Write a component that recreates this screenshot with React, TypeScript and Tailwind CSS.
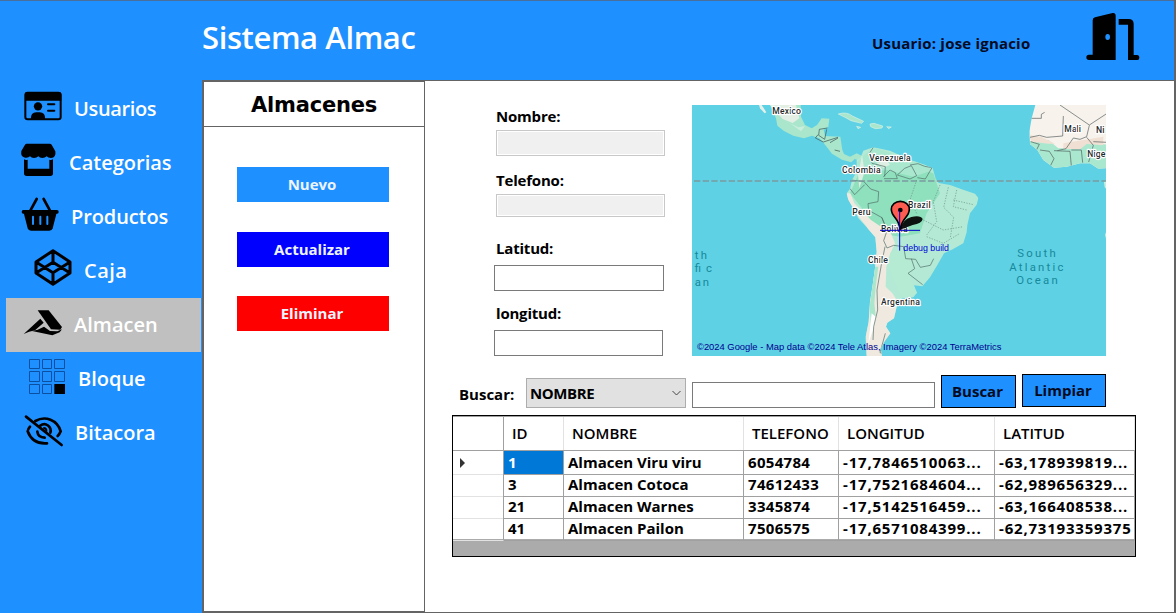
import type { ReactNode } from "react";

type NavItem = {
  label: string;
  iconWidth: string;
  viewBox: string;
  tracking: string;
  active?: boolean;
  icon: ReactNode;
};

const navItems: NavItem[] = [
  {
    label: "Usuarios",
    iconWidth: "w-[68px]",
    viewBox: "18 -9 204 162",
    tracking: "tracking-[-0.35px]",
    icon: (
      <>
        <rect x="76" y="23" width="106" height="80" rx="7" fill="none" stroke="#000" strokeWidth="6" />
        <path d="M75 47V29q0-8 8-8h93q8 0 8 8v18z" />
        <circle cx="114" cy="64" r="12.5" />
        <path d="M92 104q0-22 17-22h10q17 0 17 22z" />
        <path d="M144 58h19M144 77h19" stroke="#000" strokeWidth="6" strokeLinecap="round" />
      </>
    ),
  },
  {
    label: "Categorias",
    iconWidth: "w-[63px]",
    viewBox: "18 153 189 162",
    tracking: "tracking-normal",
    icon: (
      <>
        <path d="M80 176h69q4 0 6 3l11 20q3 19-13 20-9 0-13-5-5 5-13 5t-12-5q-5 5-13 5t-12-5q-5 5-14 4-15-2-12-20l11-19q2-3 5-3z" />
        <path d="M72 223q5 3 11 1v27h65v-27q6 2 11-1v42q0 8-8 8H80q-8 0-8-8z" />
      </>
    ),
  },
  {
    label: "Productos",
    iconWidth: "w-[65px]",
    viewBox: "18 315 195 162",
    tracking: "tracking-[-0.1px]",
    icon: (
      <>
        <path d="M110 342L91 377M131 342l19 35" stroke="#000" strokeWidth="8" strokeLinecap="round" />
        <rect x="65" y="375" width="111" height="11" rx="5" />
        <path d="M71 383l12 47q2 7 10 7h55q8 0 10-7l12-47z" />
        <path d="M99 395v22M121 395v22M142 395v22" stroke="#1e90ff" strokeWidth="6" strokeLinecap="round" />
      </>
    ),
  },
  {
    label: "Caja",
    iconWidth: "w-[78px]",
    viewBox: "18 -78 234 162",
    tracking: "tracking-[0.5px]",
    icon: (
      <path
        d="M159-58l51 34v33l-51 34-51-34v-33zM159-58v35M159 43V8M108-24l51 32 51-32M108 9l51-32 51 32"
        fill="none"
        stroke="#000"
        strokeWidth="9"
        strokeLinejoin="round"
      />
    ),
  },
  {
    label: "Almacen",
    iconWidth: "w-[68px]",
    viewBox: "18 84 204 162",
    tracking: "tracking-normal",
    active: true,
    icon: (
      <>
        <path d="M113 121h33l40 50-5 8-28-1z" />
        <path d="M71 192l50-46 10 12-26 23q-18 3-34 11z" />
        <path d="M96 183l17-4 19-9 18 13 22 1 14-6-7 9-22 9z" />
      </>
    ),
  },
  {
    label: "Bloque",
    iconWidth: "w-[72px]",
    viewBox: "18 246 216 162",
    tracking: "tracking-normal",
    icon: (
      <>
        <path
          d="M88.500 268.500h30v27h-30zM127.500 268.500h27v27h-27zM163.500 268.500h30v27h-30zM88.500 304.500h30v30h-30zM127.500 304.500h27v30h-27zM163.500 304.500h30v30h-30zM88.500 343.500h30v27h-30zM127.500 343.500h27v27h-27z"
          fill="none"
          stroke="#0a4fa0"
          strokeWidth="3"
        />
        <path d="M163 342h32v30h-32z" />
      </>
    ),
  },
  {
    label: "Bitacora",
    iconWidth: "w-[69px]",
    viewBox: "18 408 207 162",
    tracking: "tracking-normal",
    icon: (
      <g fill="none" stroke="#000" strokeWidth="8" strokeLinecap="round">
        <path d="M78 440l107 85" />
        <path d="M106 453c30-17 66-3 76 31q-3 8-9 14" />
        <path d="M90 470q-6 7-7 14c10 27 32 38 58 36" />
        <path d="M121 467c16-12 35 4 30 21" />
        <path d="M112 485q2 17 22 18" />
        <path d="M132 474q8 2 7 9" strokeWidth="6" />
      </g>
    ),
  },
];

const columns = [
  { label: "ID", cell: "" },
  { label: "NOMBRE", cell: "" },
  { label: "TELEFONO", cell: "tracking-[0.3px]" },
  { label: "LONGITUD", cell: "tracking-[0.8px]" },
  { label: "LATITUD", cell: "tracking-[0.8px]" },
];

const rows = [
  ["1", "Almacen Viru viru", "6054784", "-17,7846510063...", "-63,178939819..."],
  ["3", "Almacen Cotoca", "74612433", "-17,7521684604...", "-62,989656329..."],
  ["21", "Almacen Warnes", "3345874", "-17,5142516459...", "-63,166408538..."],
  ["41", "Almacen Pailon", "7506575", "-17,6571084399...", "-62,73193359375"],
];

function Sidebar() {
  return (
    <nav className="w-[202px] shrink-0 pt-[2px] pl-[6px]">
      {navItems.map((item) => (
        <div
          key={item.label}
          className={`flex h-[54px] w-[195px] items-center ${item.active ? "bg-[#c0c0c0]" : ""}`}
        >
          <svg className={`h-[54px] shrink-0 ${item.iconWidth}`} viewBox={item.viewBox}>
            {item.icon}
          </svg>
          <span className={`pb-px text-[20px] leading-[26px] font-semibold text-white ${item.tracking}`}>
            {item.label}
          </span>
        </div>
      ))}
    </nav>
  );
}

function Header() {
  return (
    <header className="flex h-[80px] shrink-0 items-start border-t border-[#4a6f9a]">
      <h1 className="ml-[202px] w-[670px] pt-[16px] text-[31px] leading-[40px] font-semibold tracking-[-0.4px] text-white">
        Sistema Almac
      </h1>
      <span className="w-[208px] pt-[32px] text-[15px] leading-[20px] font-bold tracking-[0.2px] whitespace-nowrap text-[#050a1e]">
        Usuario: jose ignacio
      </span>
      <svg className="h-[79px] w-[66px]" viewBox="690 3 198 237">
        <path d="M728 61q0-7 7-9l53-13q9-1 9 8v133h-80q-8 0-8-8t8-8h11z" />
        <ellipse cx="773" cy="111" rx="7" ry="9" fill="#1e90ff" />
        <path d="M806 57h30q15 0 15 15v93h10q7 0 7 8t-7 7h-27V74h-28z" />
      </svg>
    </header>
  );
}

function ActionsPanel() {
  return (
    <aside className="flex w-[223px] shrink-0 flex-col border-t-2 border-r border-b-2 border-l-2 border-[#646464] bg-white">
      <h2 className="h-[45px] border-b border-[#646464] pr-0.5 pl-[2px] text-center font-['DejaVu_Sans'] text-[21px] leading-[47px] font-bold tracking-[-0.2px]">
        Almacenes
      </h2>
      <div className="flex flex-col pt-[40px] pl-[33px] text-[15px] font-bold text-[#eef4ff]">
        <button className="mb-[30px] h-[35px] w-[152px] bg-[#1e90ff] pr-[2px]">Nuevo</button>
        <button className="mb-[29px] h-[35px] w-[152px] bg-[#0000ff] pr-[2px]">Actualizar</button>
        <button className="h-[35px] w-[152px] bg-[#ff0000] pr-[2px]">Eliminar</button>
      </div>
    </aside>
  );
}

function LocationMap() {
  const halo = { stroke: "#fff", strokeWidth: 7, strokeLinejoin: "round" as const, paintOrder: "stroke" };
  return (
    <svg className="h-[251px] w-[414px] shrink-0" viewBox="6 15 1242 753" preserveAspectRatio="none">
      <defs>
        <clipPath id="continent">
          <path d="M500 180L512 172 520 152 550 142 600 152 660 180 700 193 728 205 737 236 746 249 780 255 815 268 855 281 865 294 860 314 840 340 832 375 830 397 820 430 788 448 762 460 742 495 720 532 697 559 672 556 681 578 670 592 635 595 620 620 612 655 592 668 588 680 601 700 585 722 572 745 576 770H530L527 710 536 665 540 605 548 555 555 505 560 455 556 412 530 382 505 355 490 325 475 300 470 280 480 266 486 240 500 215z" />
        </clipPath>
        <clipPath id="africa">
          <path d="M1036 15L1025 55 1018 95 1020 132 1042 150 1060 180 1092 203 1130 200 1170 190 1200 190 1225 206 1250 205V15z" />
        </clipPath>
      </defs>
      <rect x="6" y="15" width="1242" height="753" fill="#5fd1e4" />

      <path d="M207 15h8l14 22-5 3-14-15z" fill="#e6f1ea" />
      <path d="M240 15h92l1 35 12 25 20 10 16-10 14-20 23 1-3 24-14 9 4 19 46 2 6 40 5 12 18 8 20-10 16 8-4 15-18-6-10 10-28-8-30-18-22-28-16-18-22-8-24 8-32-8-28-14-20-16-4-22z" fill="#a9e6cc" />
      <path d="M240 15h78l10 40-20 14-30-12z" fill="#e3efe4" />
      <path d="M300 70l25 12 20-4-12 16z" fill="#c9eedd" />
      <path d="M412 84l-24 4-2 18 18 12 6-30M384 104l-8 10 24 12 44-14M420 128l24-14M434 150l16 4" fill="none" stroke="#4e6a66" strokeWidth="2.500" />
      <path d="M445 42q25-8 42 6l34 16-6 6-32-8-18-10zM540 72l12-2 26 8-2 6-20 2-14-6zM500 79l12 3-8 4zM590 80l14 1-8 5z" fill="#a9e6cc" stroke="#d6f2e8" strokeWidth="2" />

      <g clipPath="url(#continent)">
        <rect x="460" y="130" width="420" height="640" fill="#b4ead5" />
        <path d="M520 190q60-30 130 0l80 30 20 60-40 60-20 60-60 10-60-10-50-70-40-50z" fill="#8fe0bd" />
        <path d="M500 190q30-40 60-45l110 35 60 30-60 20-80-20-70 10z" fill="#a9e8cf" />
        <path d="M465 280l16 0 12 30 20 20 30 30 30 20 30 20 12 30-14 30-12 40-2 60 20 20 20 30 30 30-20 30-10 30-2 90H520l10-120 12-130 8-100-20-60-40-50z" fill="#efe9df" />
        <path d="M516 165l8 50-16 50-4-40zM560 190l30-10 10 14-20 10z" fill="#ddeee2" />
        <path d="M555 500l10 0-8 60-4 50 4 40-14 30-4-60z" fill="#a9e6cc" />
        <path d="M545 640l12 10-8 40-14 40z" fill="#fff" />
        <path d="M600 460l40-20 30 40-10 60 22 40-40 14-24-40-20-50z" fill="#b5ebd3" />
        <g fill="none" stroke="#4e6a66" strokeWidth="2">
          <path d="M550 142l-12 18 8 30 40 10-2 30M484 240l38 5 20 22 24 8-2 30-30 6 2 20 40 22 14 34M580 230l20-20 16 8 6 18-40 0M622 225l22-20 20-8 16 30-20 10zM660 195l24-4 20 8 22 4-20 34-24-4M480 266l14 18 30-30M575 352l16 40-10 30 10 22 20-8 30 4 6 36 30 2 14 24 30-6 10-20M664 476l10 30-20 14 44 34M585 440l-12 60-12 70 2 60-12 50-2 40M586 700l-16 58 24 6" />
          <path d="M680 240l-20 60 20 40M750 255l-20 50 10 60-30 40M775 262l-14 60 30 30-10 60M800 270l-10 50 40 10M700 360l60 30 60-10M710 410l50 20 50-30M790 300l60 14" strokeDasharray="4 4" stroke="#6d8f89" />
        </g>
      </g>

      <g clipPath="url(#africa)">
        <rect x="1010" y="15" width="240" height="200" fill="#f8f2ec" />
        <path d="M1015 125l60-5 30 25 60 0 30-20 60 10v80h-240z" fill="#a9e8cf" />
        <path d="M1015 105l40 6 40 20-20 0-50-6zM1120 130l60-10 60-10v26l-50-4-20 16-50-2z" fill="#efe0d3" />
        <g fill="none" stroke="#4e5a5a" strokeWidth="2">
          <path d="M1020 55h34v-12l10-6M1110 15l88 60 52-34M1020 112l28-6 22 6 48-4 2-60M1198 76l-8 34-20 8-20-4-22 32-26 6M1022 125l26 8-8 16M1050 150l28 4 14 22-12 24M1092 152l48 2 4 44M1144 150l30 0 4 38M1190 112l20 24-14 50M1210 125l40 2" />
        </g>
      </g>
      <path d="M1250 240l-8 6 2 16 6 6zM1250 392l-5 12 5 20z" fill="#c8f0e2" />

      <path d="M12 243H1248" stroke="#7b9aa0" strokeWidth="4.500" strokeDasharray="19 7" />

      <g className="font-['Roboto']" fontSize="26" fontWeight="500" fill="#1f2a2c">
        <text x="247" y="43" textLength="86" {...halo}>Mexico</text>
        <text x="538" y="183" textLength="124" {...halo}>Venezuela</text>
        <text x="456" y="220" textLength="116" {...halo}>Colombia</text>
        <text x="487" y="345" textLength="55" {...halo}>Peru</text>
        <text x="654" y="324" textLength="68" {...halo}>Brazil</text>
        <text x="573" y="396" textLength="80" {...halo}>Bolivia</text>
        <text x="534" y="489" textLength="60" {...halo}>Chile</text>
        <text x="573" y="615" textLength="117" {...halo}>Argentina</text>
        <text x="1123" y="97" textLength="50" {...halo}>Mali</text>
        <text x="1218" y="99" {...halo}>Ni</text>
        <text x="1192" y="171" textLength="54" {...halo}>Nige</text>
      </g>
      <g className="font-['Roboto']" fontSize="34" fill="#16899b">
        <text x="982" y="471" textLength="115">South</text>
        <text x="958" y="514" textLength="162">Atlantic</text>
        <text x="979" y="552" textLength="124">Ocean</text>
        <text x="14" y="477" textLength="37">th</text>
        <text x="14" y="516" textLength="52">fic</text>
        <text x="14" y="559" textLength="43">an</text>
      </g>

      <path d="M630 389q6-30 34-38 28-6 34 6-2 14-30 18z" fill="#000" opacity=".92" />
      <path d="M630 390q-2-22-14-36-12-14-12-26a26 23 0 0 1 54 0q0 12-12 26-12 14-16 36z" fill="#fd5c50" stroke="#000" strokeWidth="5" />
      <circle cx="631" cy="330" r="7" />
      <path d="M570 391h120M629 332v120" stroke="#0000c8" strokeWidth="3" />
      <g className="font-['Liberation_Sans']">
        <text x="640" y="452" fontSize="26" fill="#0000d8" textLength="137" lengthAdjust="spacingAndGlyphs">debug build</text>
        <text x="21" y="749" fontSize="27" fill="#000090" textLength="913" lengthAdjust="spacingAndGlyphs">
          ©2024 Google - Map data ©2024 Tele Atlas, Imagery ©2024 TerraMetrics
        </text>
      </g>
    </svg>
  );
}

function WarehouseForm() {
  return (
    <div className="flex w-[198px] shrink-0 flex-col text-[15px] leading-[20px] font-bold tracking-[-0.2px]">
      <label className="mt-[1px] ml-[2px]">Nombre:</label>
      <input disabled className="mt-[4px] ml-[2px] h-[26px] w-[169px] border border-[#c8c8c8] bg-[#f0f0f0] shadow-[inset_0_0_0_1px_#fff]" />
      <label className="mt-[14px] ml-[2px]">Telefono:</label>
      <input disabled className="mt-[4px] ml-[2px] h-[23px] w-[169px] border border-[#c8c8c8] bg-[#f0f0f0] shadow-[inset_0_0_0_1px_#fff]" />
      <label className="mt-[21px] ml-[2px]">Latitud:</label>
      <input className="mt-[7px] h-[26px] w-[170px] border border-[#7a7a7a] bg-white" />
      <label className="mt-[12px] ml-[2px]">longitud:</label>
      <input className="mt-[7px] h-[26px] w-[169px] border border-[#7a7a7a] bg-white" />
    </div>
  );
}

function SearchBar() {
  return (
    <div className="mt-[18px] ml-[34px] flex h-[34px] items-end text-[15px] font-bold">
      <label className="mb-[4px] w-[67px] leading-[20px]">Buscar:</label>
      <div className="mr-[6px] flex h-[30px] w-[160px] items-center justify-between border border-[#adadad] bg-[#e1e1e1] pr-[4px] pl-[3px]">
        <span className="tracking-[-0.4px]">NOMBRE</span>
        <svg className="h-[6px] w-[9px]" viewBox="0 0 9 6" fill="none" stroke="#444">
          <path d="M.5 1l4 4 4-4" />
        </svg>
      </div>
      <input className="mr-[6px] h-[26px] w-[243px] border border-[#7a7a7a] bg-white" />
      <button className="mr-[6px] h-[33px] w-[75px] border border-black bg-[#1e90ff] pr-[2px] text-[#050a1e]">Buscar</button>
      <button className="mb-px h-[33px] w-[84px] border border-black bg-[#1e90ff] pr-[2px] text-[#050a1e]">Limpiar</button>
    </div>
  );
}

function WarehouseTable() {
  return (
    <div className="mt-[7px] ml-[27px] h-[142px] w-[684px] border border-black bg-[#ababab] text-[15px]">
      <div className="grid h-[35px] grid-cols-[51px_60px_180px_95px_156px_140px] border-t border-b border-[#a0a0a0] bg-white leading-[32px] font-semibold">
        <div className="border-r border-[#a0a0a0]" />
        {columns.map((column) => (
          <div key={column.label} className="border-r border-[#e2e2e2] pl-[8px] whitespace-nowrap">
            {column.label}
          </div>
        ))}
      </div>
      {rows.map((row, rowIndex) => (
        <div
          key={row[0]}
          className="grid h-[22px] grid-cols-[51px_60px_180px_95px_156px_140px] bg-white leading-[23px] font-bold"
        >
          <div className="flex items-center border-r border-b border-r-[#a0a0a0] border-b-[#e2e2e2] pl-[7px]">
            {rowIndex === 0 && (
              <svg className="h-[10px] w-[5px]" viewBox="0 0 5 10">
                <path d="M0 0l5 5-5 5z" fill="#333" />
              </svg>
            )}
          </div>
          {row.map((value, index) => (
            <div
              key={index}
              className={`border-r border-b border-[#a0a0a0] pl-[4px] whitespace-nowrap ${columns[index].cell} ${
                rowIndex === 0 && index === 0 ? "bg-[#0078d7] text-white" : ""
              }`}
            >
              {value}
            </div>
          ))}
        </div>
      ))}
    </div>
  );
}

export default function App() {
  return (
    <div className="flex h-[613px] w-[1176px] flex-col overflow-hidden border-r-2 border-[#646464] bg-[#1e90ff] font-['Open_Sans',sans-serif] text-black">
      <Header />
      <div className="flex min-h-0 grow">
        <Sidebar />
        <ActionsPanel />
        <main className="min-w-0 grow border-t border-b border-[#646464] bg-white">
          <div className="flex pt-[24px] pl-[69px]">
            <WarehouseForm />
            <LocationMap />
          </div>
          <SearchBar />
          <WarehouseTable />
        </main>
      </div>
    </div>
  );
}
